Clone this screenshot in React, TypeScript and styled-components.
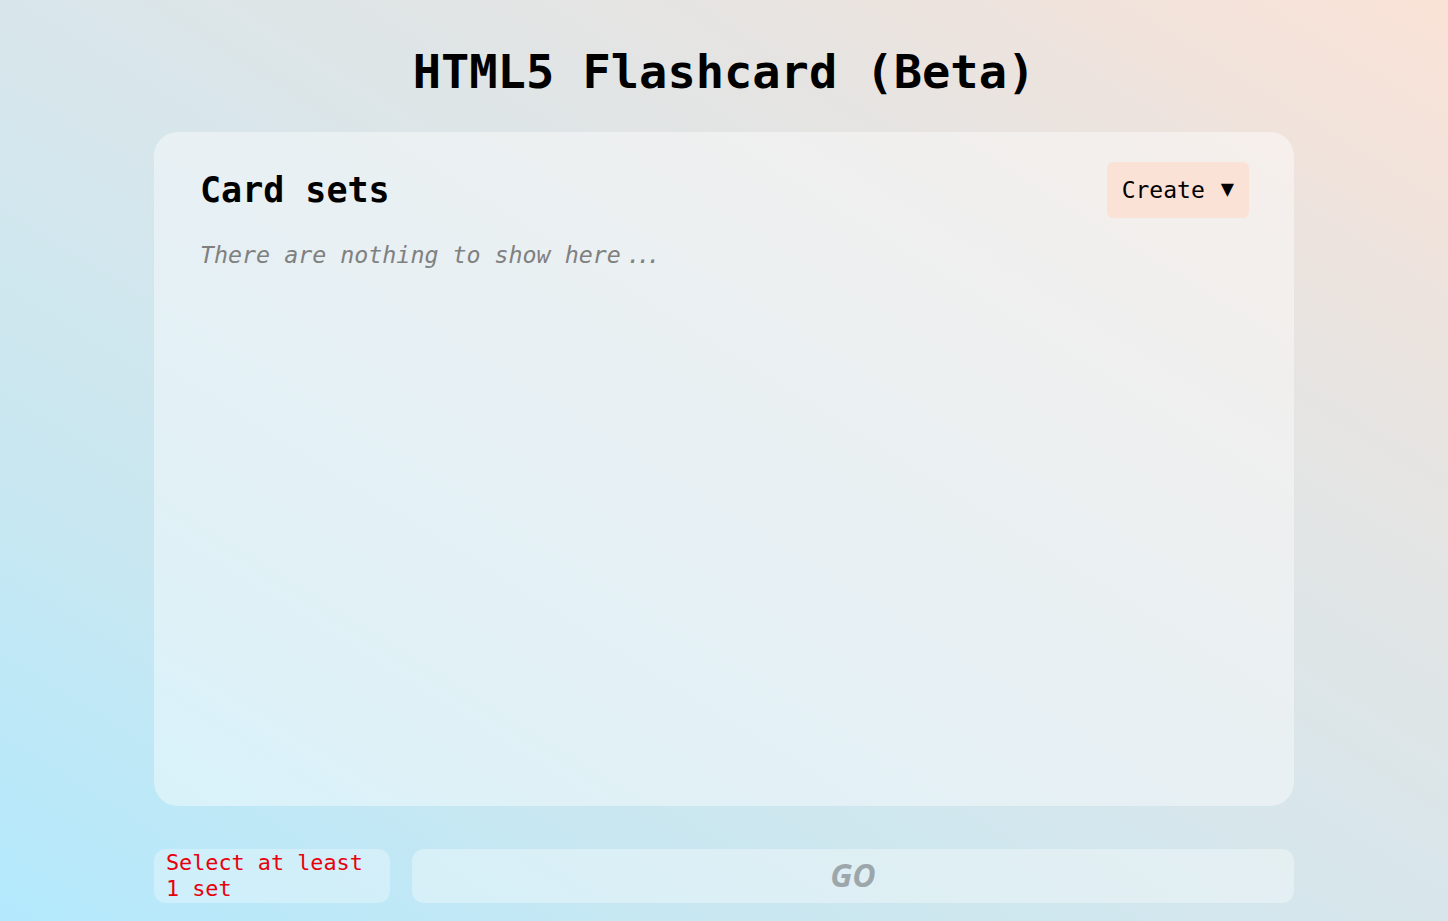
import React from "react";
import styled, { createGlobalStyle } from "styled-components";

const Global = createGlobalStyle`
  html, body { margin: 0; padding: 0; }
  body {
    min-height: 921px;
    background: linear-gradient(32deg, #b3e9fd 0%, #c8e7f1 25%, #d8e6eb 50%, #e6e4e2 74%, #fae2d6 100%);
    background-attachment: fixed;
    font-family: "DejaVu Sans Mono", "Liberation Mono", monospace;
  }
`;

const Page = styled.div`
  width: 1140px;
  margin: 0 auto;
  padding-top: 40px;
  display: flex;
  flex-direction: column;
`;

const Title = styled.h1`
  margin: 0;
  height: 64px;
  line-height: 64px;
  text-align: center;
  font-size: 47px;
  font-weight: bold;
  color: #000;
`;

const Card = styled.section`
  margin-top: 28px;
  height: 674px;
  box-sizing: border-box;
  padding: 30px 45px 30px 46px;
  border-radius: 24px;
  background: rgba(255, 255, 255, 0.42);
  display: flex;
  flex-direction: column;
`;

const Header = styled.div`
  display: flex;
  align-items: center;
  justify-content: space-between;
  height: 56px;
`;

const Heading = styled.h2`
  margin: 0;
  font-size: 35px;
  font-weight: bold;
  color: #000;
`;

const CreateButton = styled.button`
  height: 56px;
  padding: 0 15px;
  border: none;
  border-radius: 6px;
  background: #fbe2d6;
  font-family: inherit;
  font-size: 23px;
  color: #000;
  display: flex;
  align-items: center;
  gap: 16px;
  cursor: pointer;
`;

const Caret = styled.span`
  font-size: 22px;
  line-height: 1;
  margin-top: -3px;
`;

const Empty = styled.p`
  margin: 23px 0 0;
  font-size: 23.3px;
  line-height: 28px;
  font-style: italic;
  color: #808080;
`;

const Dots = styled.span`
  letter-spacing: -4px;
  margin-left: 6px;
`;

const Footer = styled.div`
  margin-top: 43px;
  display: grid;
  grid-template-columns: 236px 1fr;
  gap: 22px;
  height: 53px;
`;

const Notice = styled.div`
  border-radius: 12px;
  background: rgba(255, 255, 255, 0.3);
  padding: 1px 12px;
  box-sizing: border-box;
  color: #e8000b;
  font-size: 21.8px;
  line-height: 26px;
`;

const GoButton = styled.button`
  border: none;
  border-radius: 12px;
  background: rgba(255, 255, 255, 0.35);
  font-family: "Open Sans", "Noto Sans", sans-serif;
  font-style: italic;
  font-weight: bold;
  font-size: 32px;
  color: #9ca7ac;
  cursor: not-allowed;
  padding: 0 0 4px;
`;

export default function App() {
  return (
    <>
      <Global />
      <Page>
        <Title>HTML5 Flashcard (Beta)</Title>
        <Card>
          <Header>
            <Heading>Card sets</Heading>
            <CreateButton>
              Create <Caret>▼</Caret>
            </CreateButton>
          </Header>
          <Empty>
            There are nothing to show here<Dots>...</Dots>
          </Empty>
        </Card>
        <Footer>
          <Notice>Select at least 1 set</Notice>
          <GoButton disabled>GO</GoButton>
        </Footer>
      </Page>
    </>
  );
}
